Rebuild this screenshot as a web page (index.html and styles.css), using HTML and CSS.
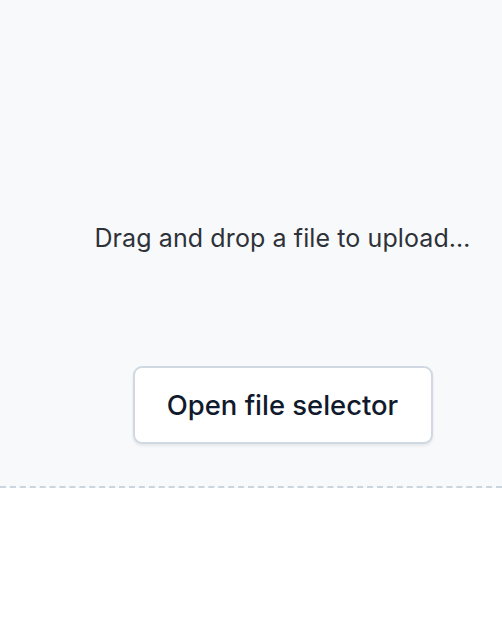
FILE: index.html
```html
<!DOCTYPE html>
<html lang="en">
<head>
<meta charset="utf-8">
<title>Upload</title>
<link rel="stylesheet" href="styles.css">
</head>
<body>
  <div class="dropzone">
    <p class="hint">Drag and drop a file to upload…</p>
    <button class="picker" type="button">Open file selector</button>
  </div>
</body>
</html>
```
FILE: styles.css
```css
html, body {
  margin: 0;
  padding: 0;
  background: #ffffff;
  overflow: hidden;
}
body {
  width: 502px;
  height: 630px;
  font-family: Inter, "Noto Sans", sans-serif;
}
.dropzone {
  width: 439px;
  height: 486px;
  box-sizing: content-box;
  padding-left: 63px;
  background: #f8f9fb;
  border-bottom: 2px dashed #cbd5de;
  display: flex;
  flex-direction: column;
  align-items: center;
}
.hint {
  margin: 224px 0 0;
  font-size: 25px;
  line-height: 28px;
  letter-spacing: 0.1px;
  color: #2e3238;
  white-space: nowrap;
}
.picker {
  margin-top: 114px;
  width: 300px;
  height: 78px;
  box-sizing: border-box;
  background: #ffffff;
  border: 2px solid #d0d9e1;
  border-radius: 9px;
  box-shadow: 0 2px 3px rgba(15, 23, 42, 0.08);
  font-family: inherit;
  font-size: 27.4px;
  font-weight: 500;
  color: #111a2c;
  cursor: pointer;
  flex-shrink: 0;
}
```
